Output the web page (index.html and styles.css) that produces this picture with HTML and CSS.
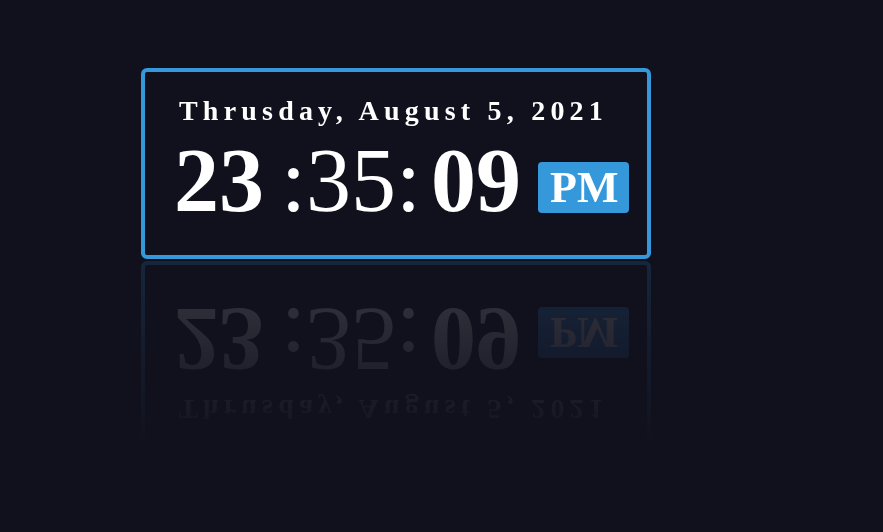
FILE: index.html
```html
<!DOCTYPE html>
<html lang="en">
<head>
<meta charset="utf-8">
<title>Clock</title>
<link rel="stylesheet" href="styles.css">
</head>
<body>
  <div class="clock">
    <div class="date">Thrusday, August 5, 2021</div>
    <div class="time">
      <span class="hours">23</span>
      <span class="sep sep-first">:</span>
      <span class="minutes">35</span>
      <span class="sep">:</span>
      <span class="seconds">09</span>
      <span class="period">PM</span>
    </div>
  </div>
</body>
</html>
```

FILE: styles.css
```css
html, body {
  margin: 0;
  padding: 0;
  background: #11111e;
}

body {
  width: 883px;
  height: 532px;
  overflow: hidden;
  padding: 68px 0 0 141px;
  box-sizing: border-box;
  font-family: "Liberation Serif", "Times New Roman", serif;
  color: #ffffff;
}

.clock {
  width: 510px;
  box-sizing: border-box;
  border: 4px solid #3498db;
  border-radius: 6px;
  padding: 23px 0 24px 0;
  -webkit-box-reflect: below 2px linear-gradient(transparent, rgba(255, 255, 255, 0.16));
}

.date {
  font-size: 28px;
  font-weight: bold;
  letter-spacing: 5.2px;
  line-height: 32px;
  text-align: center;
  padding-right: 5px;
}

.time {
  display: flex;
  align-items: flex-start;
  margin-top: 4px;
  padding-left: 29px;
  font-size: 90px;
  line-height: 100px;
}

.hours,
.seconds {
  font-weight: bold;
}

.minutes,
.sep {
  font-weight: normal;
}

.sep-first {
  margin-left: 17px;
}

.seconds {
  margin-left: 10px;
}

.period {
  margin-left: 17px;
  margin-top: 31px;
  background: #3498db;
  border-radius: 4px;
  font-size: 44px;
  font-weight: bold;
  line-height: 51px;
  padding: 0 11px 0 12px;
}
```
